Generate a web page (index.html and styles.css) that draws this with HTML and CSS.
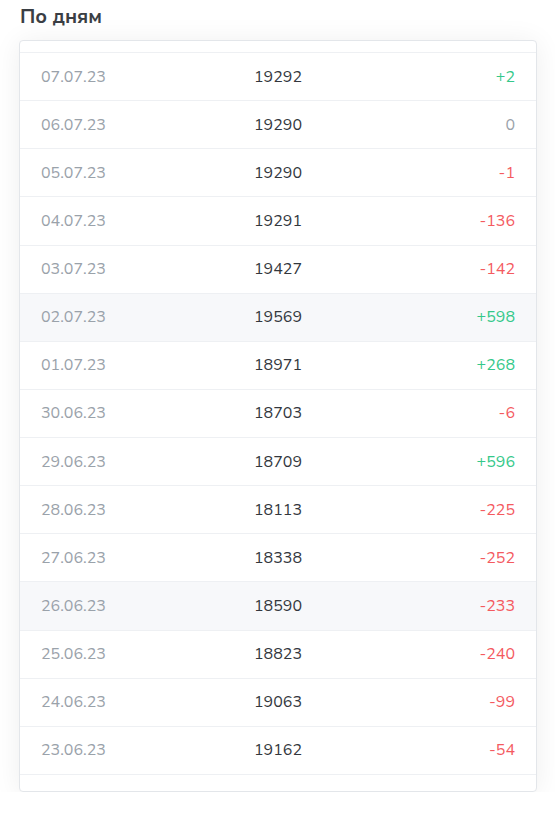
FILE: index.html
```html
<!DOCTYPE html>
<html lang="ru">
<head>
<meta charset="utf-8">
<link rel="stylesheet" href="styles.css">
</head>
<body>
<div class="page">
  <h2 class="title">По дням</h2>
  <div class="card">
    <div class="list">
      <div class="row"><span class="date">07.07.23</span><span class="val">19292</span><span class="delta up">+2</span></div>
      <div class="row"><span class="date">06.07.23</span><span class="val">19290</span><span class="delta zero">0</span></div>
      <div class="row"><span class="date">05.07.23</span><span class="val">19290</span><span class="delta down">-1</span></div>
      <div class="row"><span class="date">04.07.23</span><span class="val">19291</span><span class="delta down">-136</span></div>
      <div class="row"><span class="date">03.07.23</span><span class="val">19427</span><span class="delta down">-142</span></div>
      <div class="row hl"><span class="date">02.07.23</span><span class="val">19569</span><span class="delta up">+598</span></div>
      <div class="row"><span class="date">01.07.23</span><span class="val">18971</span><span class="delta up">+268</span></div>
      <div class="row"><span class="date">30.06.23</span><span class="val">18703</span><span class="delta down">-6</span></div>
      <div class="row"><span class="date">29.06.23</span><span class="val">18709</span><span class="delta up">+596</span></div>
      <div class="row"><span class="date">28.06.23</span><span class="val">18113</span><span class="delta down">-225</span></div>
      <div class="row"><span class="date">27.06.23</span><span class="val">18338</span><span class="delta down">-252</span></div>
      <div class="row hl"><span class="date">26.06.23</span><span class="val">18590</span><span class="delta down">-233</span></div>
      <div class="row"><span class="date">25.06.23</span><span class="val">18823</span><span class="delta down">-240</span></div>
      <div class="row"><span class="date">24.06.23</span><span class="val">19063</span><span class="delta down">-99</span></div>
      <div class="row"><span class="date">23.06.23</span><span class="val">19162</span><span class="delta down">-54</span></div>
    </div>
  </div>
</div>
</body>
</html>
```

FILE: styles.css
```css
html, body {
  margin: 0;
  padding: 0;
  background: #ffffff;
}
body {
  font-family: "Nunito Sans", Lato, "Open Sans", sans-serif;
}
.page {
  padding: 3px 18px 0 19px;
}
.title {
  margin: 0 0 10px 1px;
  font-size: 20px;
  line-height: 27px;
  font-weight: 700;
  color: #3a3e44;
}
.card {
  border: 1px solid #e3e6ea;
  border-radius: 4px;
  background: #fff;
  box-shadow: 0 2px 28px rgba(0, 0, 0, 0.07);
  padding: 11px 0 16px;
}
.list {
  border-top: 1px solid #eef0f3;
}
.row {
  display: grid;
  grid-template-columns: 1fr auto 1fr;
  align-items: center;
  height: 47.13px;
  padding: 0 21px;
  border-bottom: 1px solid #eef0f3;
  font-size: 16px;
}
.row.hl {
  background: #f7f8fa;
}
.date {
  color: #9aa2aa;
}
.val {
  color: #33373d;
}
.delta {
  text-align: right;
}
.up { color: #34c88a; }
.down { color: #f45a5f; }
.zero { color: #9aa2aa; }
```
